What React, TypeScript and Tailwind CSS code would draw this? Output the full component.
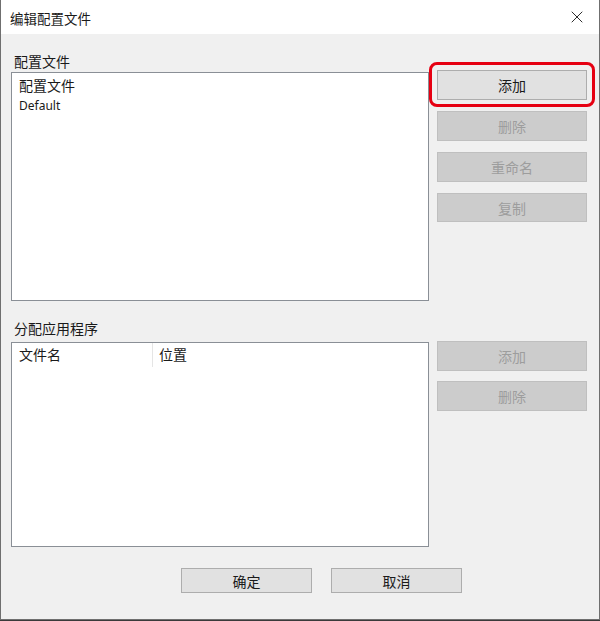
import { X } from "lucide-react";

const font = { fontFamily: '"Noto Sans CJK SC", "Noto Sans", sans-serif' };

function Btn({ label, disabled = false, w = "w-[150px]", h = "h-[30px]" }: { label: string; disabled?: boolean; w?: string; h?: string }) {
  return (
    <button
      className={`${w} ${h} flex items-center justify-center border text-[14px] leading-none ${
        disabled ? "border-[#bfbfbf] bg-[#cccccc] text-[#9d9d9d]" : "border-[#adadad] bg-[#e1e1e1] text-[#1a1a1a]"
      }`}
    >
      {label}
    </button>
  );
}

export default function App() {
  return (
    <div className="w-[600px] h-[621px] bg-[#3a3a3a]" style={font}>
      <div className="h-[620px] flex flex-col border-x border-b border-[#6f6f6f] bg-[#f0f0f0]">
        {/* title bar */}
        <div className="h-[34px] shrink-0 flex items-center justify-between bg-white pl-[9px] pr-[12px]">
          <span className="text-[13.5px] text-[#1a1a1a] pt-[2px]">编辑配置文件</span>
          <X className="w-[20px] h-[20px] text-[#1a1a1a]" strokeWidth={1.1} />
        </div>

        <div className="flex flex-col pl-[10px] pt-[17px]">
          {/* profiles */}
          <div className="flex">
            <div className="w-[418px] flex flex-col">
              <div className="h-[20px] pl-[3px] text-[14px] leading-[20px] text-[#1a1a1a]">配置文件</div>
              <div className="mt-[1px] h-[229px] border border-[#8a8f96] bg-white px-[7px] pt-[2px]">
                <div className="text-[14px] leading-[20px] text-[#1a1a1a]">配置文件</div>
                <div className="text-[12px] leading-[22px] text-[#1a1a1a]" style={{ fontFamily: '"Noto Sans", sans-serif' }}>
                  Default
                </div>
              </div>
            </div>
            <div className="ml-[8px] pt-[19px] flex flex-col gap-[11px]">
              <div className="relative">
                <Btn label="添加" />
                <div className="absolute -left-[8px] -top-[8px] -right-[8px] -bottom-[7px] rounded-[8px] border-[3px] border-[#e60012]" />
              </div>
              <Btn label="删除" disabled />
              <Btn label="重命名" disabled />
              <Btn label="复制" disabled h="h-[29px]" />
            </div>
          </div>

          {/* applications */}
          <div className="flex mt-[17px]">
            <div className="w-[418px] flex flex-col">
              <div className="h-[20px] pl-[3px] text-[14px] leading-[20px] text-[#1a1a1a]">分配应用程序</div>
              <div className="mt-[4px] h-[205px] border border-[#8a8f96] bg-white">
                <div className="flex h-[24px] text-[14px] leading-[22px] text-[#1a1a1a]">
                  <div className="w-[141px] pl-[7px] border-r border-[#e5e5e5]">文件名</div>
                  <div className="pl-[6px]">位置</div>
                </div>
              </div>
            </div>
            <div className="ml-[8px] pt-[23px] flex flex-col gap-[10px]">
              <Btn label="添加" disabled />
              <Btn label="删除" disabled />
            </div>
          </div>

          {/* footer */}
          <div className="flex gap-[19px] mt-[21px] ml-[170px]">
            <Btn label="确定" w="w-[131px]" h="h-[25px]" />
            <Btn label="取消" w="w-[131px]" h="h-[25px]" />
          </div>
        </div>
      </div>
    </div>
  );
}
